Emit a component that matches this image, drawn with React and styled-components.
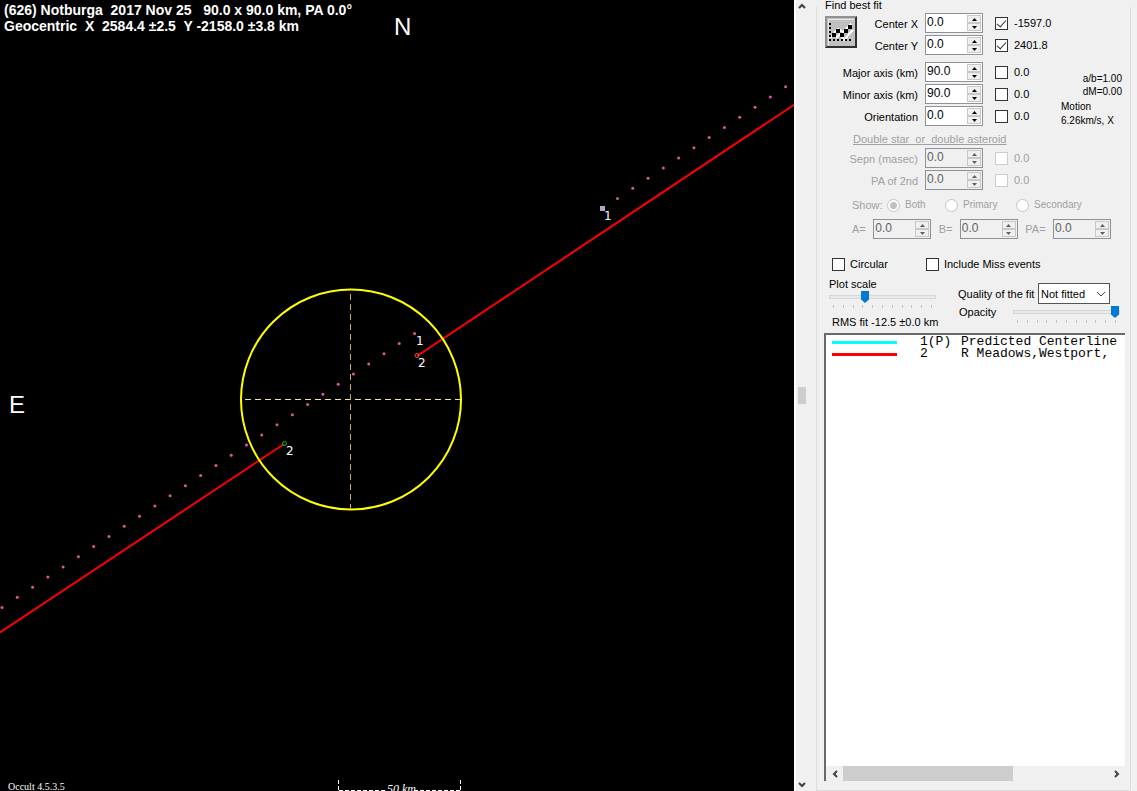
import React, { useState } from 'react';
import styled, { createGlobalStyle, css } from 'styled-components';

const GlobalStyle = createGlobalStyle`
    * {
        box-sizing: border-box;
    }
    body {
        margin: 0;
        background: #f0f0f0;
        font-family: 'Liberation Sans', Arial, sans-serif;
        font-size: 11px;
        line-height: 14px;
        color: #000;
    }
    input, select, button {
        font-family: inherit;
        font-size: inherit;
        color: inherit;
        margin: 0;
    }
`

const STEP_X = 15.28;
const STEP_Y = 10.15;

const dotsFrom = (x, y, count) =>
    Array.from({ length: count }, (_, i) => ({ x: x + i * STEP_X, y: y - i * STEP_Y }));

const predicted = [...dotsFrom(2, 607.5, 28), ...dotsFrom(617.5, 198.5, 12)];

const Chart = () => (
    <Chart__Svg viewBox="0 0 794 791" preserveAspectRatio="xMinYMin slice" role="img" aria-label="Occultation chords">
        <g stroke="#ff0000" strokeWidth="2">
            <line x1="0" y1="632.5" x2="284" y2="444" />
            <line x1="417" y1="356" x2="796" y2="103.5" />
        </g>
        <circle cx="351" cy="399.5" r="110" fill="none" stroke="#ffff00" strokeWidth="2" />
        <line x1="245" y1="399.5" x2="460" y2="399.5" stroke="#f5e68c" strokeDasharray="6 4" />
        <line x1="350.5" y1="294" x2="350.5" y2="509" stroke="#c8ab5e" strokeDasharray="6 4" />
        {predicted.map((dot, i) => (
            <circle key={i} cx={dot.x} cy={dot.y} r="1.5" fill="#e0559b" />
        ))}
        <rect x="600" y="206" width="5" height="5" fill="#b9a3c6" />
        <circle cx="284.5" cy="443.5" r="2" fill="none" stroke="#00c800" />
        <circle cx="417" cy="355.5" r="2" fill="none" stroke="#ff5040" />
        <g fill="#fff" fontSize="12" fontFamily="DejaVu Sans, sans-serif">
            <text x="604" y="220">1</text>
            <text x="416" y="345">1</text>
            <text x="418" y="367">2</text>
            <text x="286" y="455">2</text>
        </g>
        <g fill="#fff" fontSize="24">
            <text x="394" y="35">N</text>
            <text x="9" y="413">E</text>
        </g>
        <g stroke="#fff" fill="none">
            <path d="M338.5 780v11M460.5 780v11" strokeDasharray="4 2" />
            <path d="M339 790.5h46M414 790.5h46" strokeDasharray="4 2" />
        </g>
        <g fill="#fff" fontFamily="Liberation Serif, serif">
            <text x="387" y="793" fontSize="12" fontStyle="italic">50 km</text>
            <text x="8" y="790" fontSize="10">Occult 4.5.3.5</text>
        </g>
    </Chart__Svg>
)

const Spinner = ({ label, value, disabled }) => {
    const [current, setCurrent] = useState(value);
    const bump = (delta) => setCurrent((Number(current) + delta).toFixed(1));
    return (
        <Spinner__Box $disabled={disabled}>
            <Spinner__Input
                aria-label={label}
                value={current}
                disabled={disabled}
                onChange={(e) => setCurrent(e.target.value)}
            />
            <Spinner__Buttons>
                <Spinner__Button type="button" aria-label={`${label} up`} disabled={disabled} onClick={() => bump(1)}>
                    <svg width="5" height="3"><path d="M0 3L2.5 0L5 3z" fill="currentColor" /></svg>
                </Spinner__Button>
                <Spinner__Button type="button" aria-label={`${label} down`} disabled={disabled} onClick={() => bump(-1)}>
                    <svg width="5" height="3"><path d="M0 0L2.5 3L5 0z" fill="currentColor" /></svg>
                </Spinner__Button>
            </Spinner__Buttons>
        </Spinner__Box>
    )
}

const FitRow = ({ label, value, result, checked, disabled }) => (
    <FitRow__Row $disabled={disabled}>
        <FitRow__Label>{label}</FitRow__Label>
        <Spinner label={label} value={value} disabled={disabled} />
        <CheckLabel>
            <CheckBox type="checkbox" defaultChecked={checked} disabled={disabled} />
            {result}
        </CheckLabel>
    </FitRow__Row>
)

const Chevron = ({ d }) => (
    <svg width="8" height="8" viewBox="0 0 8 8">
        <path d={d} fill="none" stroke="#404040" strokeWidth="2" />
    </svg>
)

const Slider = ({ label, value }) => (
    <Slider__Box>
        <Slider__Range type="range" aria-label={label} min="0" max="10" step="0.1" defaultValue={value} />
        <Slider__Ticks>
            {Array.from({ length: 11 }, (_, i) => <i key={i} />)}
        </Slider__Ticks>
    </Slider__Box>
)

const App = () => (
    <Page>
        <GlobalStyle />
        <Plot>
            <Chart />
            <Plot__Title>
                (626) Notburga&nbsp; 2017 Nov 25&nbsp;&nbsp; 90.0 x 90.0 km, PA 0.0°<br />
                Geocentric&nbsp; X&nbsp; 2584.4 ±2.5&nbsp; Y -2158.0 ±3.8 km
            </Plot__Title>
        </Plot>
        <Side>
            <Scroll>
                <Scroll__Button type="button" aria-label="Scroll up"><Chevron d="M1 6L4 3L7 6" /></Scroll__Button>
                <Scroll__Thumb />
                <Scroll__Button type="button" aria-label="Scroll down"><Chevron d="M1 2L4 5L7 2" /></Scroll__Button>
            </Scroll>
            <Group>
                <Group__Legend>Find best fit</Group__Legend>
                <Fit>
                    <PlotButton type="button" aria-label="Plot fit">
                        <svg width="28" height="28" viewBox="0 0 28 28" shapeRendering="crispEdges">
                            <path d="M1 27V1H27" fill="none" stroke="#e8e8e8" />
                            <path d="M3 20L11 11L16 14L24 6M9 20L13 16L17 22L26 12" fill="none" stroke="#fff" strokeWidth="2" />
                            <path d="M2 5h2v2h-2zM2 9h2v2h-2zM2 13h2v2h-2zM2 17h2v2h-2zM2 21h2v2h-2zM6 21h2v2h-2zM10 21h2v2h-2zM14 21h2v2h-2zM18 21h2v2h-2zM22 21h2v2h-2z" fill="#000" />
                            <path d="M5 15h4v4h-4zM9 11h4v4h-4zM13 15h4v4h-4zM17 11h4v4h-4zM21 7h4v4h-4z" fill="#000" />
                        </svg>
                    </PlotButton>
                    <FitGroup>
                        <FitRow label="Center X" value="0.0" result="-1597.0" checked />
                        <FitRow label="Center Y" value="0.0" result="2401.8" checked />
                    </FitGroup>
                </Fit>
                <Axes>
                    <FitGroup>
                        <FitRow label="Major axis (km)" value="90.0" result="0.0" />
                        <FitRow label="Minor axis (km)" value="90.0" result="0.0" />
                        <FitRow label="Orientation" value="0.0" result="0.0" />
                    </FitGroup>
                    <Motion>
                        <Motion__Right>a/b=1.00<br />dM=0.00</Motion__Right>
                        Motion<br />6.26km/s, X
                    </Motion>
                </Axes>
                <Double__Title>Double star&nbsp; or&nbsp; double asteroid</Double__Title>
                <FitGroup>
                    <FitRow label="Sepn (masec)" value="0.0" result="0.0" disabled />
                    <FitRow label="PA of 2nd" value="0.0" result="0.0" disabled />
                </FitGroup>
                <Show>
                    <span>Show:</span>
                    <Show__Label $width={58}><Radio type="radio" name="show" defaultChecked disabled />Both</Show__Label>
                    <Show__Label $width={71}><Radio type="radio" name="show" disabled />Primary</Show__Label>
                    <Show__Label $width={80}><Radio type="radio" name="show" disabled />Secondary</Show__Label>
                </Show>
                <Ellipse>
                    <span>A=</span><Spinner label="A" value="0.0" disabled />
                    <span>B=</span><Spinner label="B" value="0.0" disabled />
                    <span>PA=</span><Spinner label="PA" value="0.0" disabled />
                </Ellipse>
                <Options>
                    <CheckLabel $gap={5}><CheckBox type="checkbox" />Circular</CheckLabel>
                    <CheckLabel $gap={5}><CheckBox type="checkbox" />Include Miss events</CheckLabel>
                </Options>
                <Scales>
                    <Scales__Plot>
                        <span>Plot scale</span>
                        <Slider label="Plot scale" value={3.2} />
                        <Scales__Rms>RMS fit -12.5 ±0.0 km</Scales__Rms>
                    </Scales__Plot>
                    <Scales__Quality>
                        <Quality__Label>
                            Quality of the fit
                            <Quality__Wrap>
                                <Quality__Select defaultValue="Not fitted">
                                    <option>Not fitted</option>
                                </Quality__Select>
                                <svg width="10" height="6"><path d="M1 1L5 5L9 1" fill="none" stroke="#404040" /></svg>
                            </Quality__Wrap>
                        </Quality__Label>
                        <Opacity>
                            <span>Opacity</span>
                            <Slider label="Opacity" value={10} />
                        </Opacity>
                    </Scales__Quality>
                </Scales>
                <List>
                    <List__Rows>
                        <List__Row>
                            <List__Swatch $color="#00ffff" />
                            <List__Id>1(P)</List__Id>
                            <span>Predicted Centerline</span>
                        </List__Row>
                        <List__Row>
                            <List__Swatch $color="#ff0000" />
                            <List__Id>2</List__Id>
                            <span>R Meadows,Westport,</span>
                        </List__Row>
                    </List__Rows>
                    <List__Scroll>
                        <List__Button type="button" aria-label="Scroll left"><Chevron d="M6 1L3 4L6 7" /></List__Button>
                        <List__Track><List__Thumb /></List__Track>
                        <List__Button type="button" aria-label="Scroll right"><Chevron d="M2 1L5 4L2 7" /></List__Button>
                    </List__Scroll>
                </List>
            </Group>
        </Side>
    </Page>
)

//page
const Page = styled.div`
    display: flex;
    height: 100vh;
    min-height: 600px;
    overflow: hidden;
`
const Plot = styled.main`
    position: relative;
    flex: 1;
    min-width: 0;
    background: #000;
    color: #fff;
`
const Plot__Title = styled.div`
    position: absolute;
    top: 2px;
    left: 4px;
    font-size: 14px;
    font-weight: bold;
    line-height: 16px;
    white-space: nowrap;
`
const Chart__Svg = styled.svg`
    display: block;
    width: 100%;
    height: 100%;
`
const Side = styled.aside`
    display: flex;
    flex: 0 0 343px;
    padding-right: 6px;
    border-left: 2px solid #fff;
`

//panel scrollbar
const Scroll = styled.div`
    display: flex;
    flex-direction: column;
    align-items: center;
    justify-content: space-between;
    width: 12px;
    margin-right: 8px;
`
const Scroll__Button = styled.button`
    display: flex;
    align-items: center;
    justify-content: center;
    width: 12px;
    height: 12px;
    padding: 0;
    border: 0;
    background: none;
`
const Scroll__Thumb = styled.div`
    width: 8px;
    height: 17px;
    background: #cdcdcd;
`

//group box
const Group = styled.fieldset`
    display: flex;
    flex-direction: column;
    flex: 1;
    min-width: 0;
    margin: 0;
    padding: 0 5px 9px 7px;
    border: 1px solid #dcdcdc;
    border-top: 0;
`
const Group__Legend = styled.legend`
    height: 13px;
    padding: 0 1px;
    line-height: 11px;
`
const Fit = styled.div`
    display: flex;
`
const PlotButton = styled.button`
    display: flex;
    align-items: center;
    justify-content: center;
    flex: none;
    width: 32px;
    height: 32px;
    margin: 3px -33px 0 1px;
    padding: 0;
    background: #c0c0c0;
    border: 2px solid;
    border-color: #909090 #303030 #303030 #909090;
`
const FitGroup = styled.div`
    display: flex;
    flex-direction: column;
    gap: 2px;
`
const FitRow__Row = styled.div`
    display: flex;
    align-items: center;
    height: 20px;
    color: ${props => props.$disabled ? '#a0a0a0' : '#000'};
`
const FitRow__Label = styled.span`
    width: 94px;
    margin-right: 7px;
    padding-top: 2px;
    text-align: right;
    white-space: nowrap;
`
const CheckLabel = styled.label`
    display: flex;
    align-items: center;
    gap: ${props => props.$gap || 6}px;
    white-space: nowrap;
    ${FitRow__Row} & {
        margin-left: 12px;
    }
`
const checkMark = css`
    &:checked::before {
        content: '';
        width: 4px;
        height: 8px;
        margin-bottom: 2px;
        border: solid #303030;
        border-width: 0 1px 1px 0;
        transform: rotate(42deg);
    }
`
const CheckBox = styled.input`
    appearance: none;
    display: flex;
    align-items: center;
    justify-content: center;
    flex: none;
    width: 13px;
    height: 13px;
    background: #fff;
    border: 1px solid #333;
    ${checkMark}
    &:disabled {
        border-color: #ccc;
    }
`

//number box
const Spinner__Box = styled.div`
    display: flex;
    flex: none;
    width: 58px;
    height: 20px;
    border: 1px solid #8c9298;
    background: ${props => props.$disabled ? '#f0f0f0' : '#fff'};
    color: ${props => props.$disabled ? '#606060' : '#000'};
`
const Spinner__Input = styled.input`
    flex: 1;
    width: 0;
    padding: 0 0 2px 1px;
    border: 0;
    background: none;
    font-size: 12px;
`
const Spinner__Buttons = styled.div`
    display: flex;
    flex-direction: column;
    width: 15px;
    padding: 1px 1px 1px 0;
`
const Spinner__Button = styled.button`
    display: flex;
    align-items: center;
    justify-content: center;
    flex: 1;
    min-height: 0;
    padding: 0;
    border: 1px solid #c8c8c8;
    background: #f0f0f0;
`

const Axes = styled.div`
    display: flex;
    justify-content: space-between;
    margin-top: 7px;
`
const Motion = styled.div`
    width: 64px;
    padding-top: 10px;
    font-size: 10px;
`
const Motion__Right = styled.div`
    line-height: 13px;
    margin: 0 3px 2px 0;
    text-align: right;
`

//double star
const Double__Title = styled.div`
    margin: 4px 0 2px 29px;
    color: #a0a0a0;
    text-decoration: underline;
`
const Show = styled.div`
    display: flex;
    align-items: center;
    height: 16px;
    margin: 7px 0 0 28px;
    color: #a0a0a0;
    white-space: nowrap;
    & > span {
        width: 35px;
    }
`
const Show__Label = styled.label`
    display: flex;
    align-items: center;
    gap: 5px;
    width: ${props => props.$width}px;
    font-size: 10px;
`
const Radio = styled.input`
    appearance: none;
    display: flex;
    flex: none;
    width: 13px;
    height: 13px;
    padding: 2px;
    border: 1px solid #c4c4c4;
    border-radius: 50%;
    background: #fff;
    &:checked::before {
        content: '';
        flex: 1;
        border-radius: 50%;
        background: #c0c0c0;
    }
`
const Ellipse = styled.div`
    display: flex;
    align-items: center;
    justify-content: space-between;
    margin: 6px 14px 0 28px;
    color: #a0a0a0;
`
const Options = styled.div`
    display: flex;
    gap: 38px;
    margin: 18px 0 0 8px;
`

//scales
const Scales = styled.div`
    display: flex;
    justify-content: space-between;
    margin-top: 6px;
    white-space: nowrap;
`
const Scales__Plot = styled.div`
    width: 112px;
    padding-left: 5px;
`
const Scales__Rms = styled.div`
    margin: 7px 0 4px 3px;
`
const Scales__Quality = styled.div`
    width: 167px;
    padding-top: 6px;
`
const Quality__Label = styled.label`
    display: flex;
    align-items: center;
    justify-content: space-between;
    margin-right: 15px;
`
const Quality__Wrap = styled.span`
    display: grid;
    align-items: center;
    & > * {
        grid-area: 1 / 1;
    }
    & > svg {
        justify-self: end;
        margin-right: 4px;
        pointer-events: none;
    }
`
const Quality__Select = styled.select`
    appearance: none;
    width: 72px;
    height: 21px;
    padding: 0 2px;
    border: 1px solid #555;
    border-radius: 0;
    background: #fff;
`
const Opacity = styled.div`
    display: flex;
    justify-content: space-between;
    margin: 1px 5px 0 1px;
    & > div {
        width: 107px;
        margin-top: 1px;
    }
`
const Slider__Box = styled.div`
    display: flex;
    flex-direction: column;
`
const Slider__Range = styled.input`
    appearance: none;
    width: 100%;
    height: 12px;
    background: none;
    &::-webkit-slider-runnable-track {
        height: 4px;
        border: 1px solid #d6d6d6;
        background: #e7eaea;
    }
    &::-webkit-slider-thumb {
        appearance: none;
        width: 8px;
        height: 12px;
        margin-top: -5px;
        background: #0078d7;
        clip-path: polygon(0 0, 100% 0, 100% 70%, 50% 100%, 0 70%);
    }
`
const Slider__Ticks = styled.div`
    display: flex;
    justify-content: space-between;
    padding: 2px 4px 0;
    & > i {
        width: 1px;
        height: 3px;
        background: #c4c4c4;
    }
`

//chord list
const List = styled.div`
    display: flex;
    flex-direction: column;
    flex: 1;
    min-height: 0;
    border: solid #696969;
    border-width: 2px 0 0 2px;
    background: #fff;
`
const List__Rows = styled.div`
    flex: 1;
    padding: 1px 0 0 6px;
    overflow: hidden;
`
const List__Row = styled.div`
    display: flex;
    align-items: center;
    height: 12px;
    font-family: 'Liberation Mono', 'Courier New', monospace;
    font-size: 13px;
    line-height: 12px;
    white-space: nowrap;
`
const List__Id = styled.span`
    width: 41px;
`
const List__Swatch = styled.span`
    flex: none;
    width: 65px;
    height: 3px;
    margin-right: 23px;
    background: ${props => props.$color};
`
const List__Scroll = styled.div`
    display: flex;
    height: 15px;
    background: #f0f0f0;
`
const List__Button = styled.button`
    display: flex;
    align-items: center;
    justify-content: center;
    width: 17px;
    padding: 0;
    border: 0;
    background: none;
`
const List__Track = styled.div`
    flex: 1;
`
const List__Thumb = styled.div`
    width: 64%;
    height: 100%;
    background: #cdcdcd;
`

export default App;
